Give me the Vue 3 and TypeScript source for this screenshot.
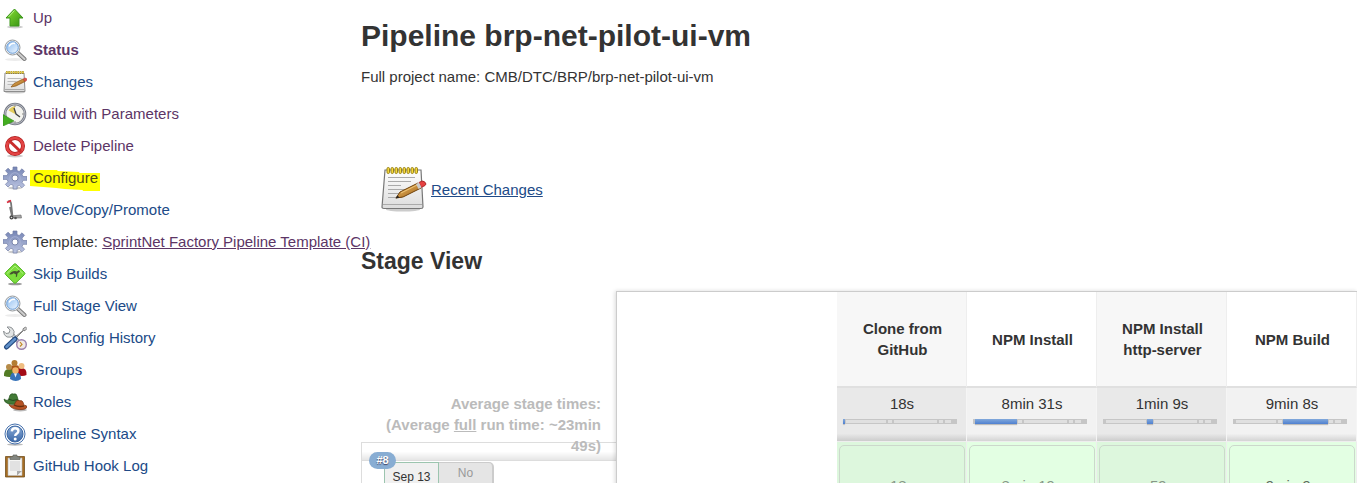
<script setup lang="ts">
interface Task {
  label: string
  icon: string
  visited?: boolean
  current?: boolean
  marked?: boolean
  prefix?: string
}

interface Stage {
  name: string
  average: string
  active: number
  run: string
  slow?: boolean
}

const tasks: Task[] = [
  { label: 'Up', icon: 'up', visited: true },
  { label: 'Status', icon: 'search', visited: true, current: true },
  { label: 'Changes', icon: 'notepad' },
  { label: 'Build with Parameters', icon: 'clock', visited: true },
  { label: 'Delete Pipeline', icon: 'delete', visited: true },
  { label: 'Configure', icon: 'gear', visited: true, marked: true },
  { label: 'Move/Copy/Promote', icon: 'trolley' },
  { label: 'SprintNet Factory Pipeline Template (CI)', icon: 'gear', visited: true, prefix: 'Template:' },
  { label: 'Skip Builds', icon: 'skip' },
  { label: 'Full Stage View', icon: 'search' },
  { label: 'Job Config History', icon: 'tools' },
  { label: 'Groups', icon: 'groups' },
  { label: 'Roles', icon: 'hats' },
  { label: 'Pipeline Syntax', icon: 'help' },
  { label: 'GitHub Hook Log', icon: 'clipboard' },
]

const stages: Stage[] = [
  { name: 'Clone from GitHub', average: '18s', active: 0, run: '18s' },
  { name: 'NPM Install', average: '8min 31s', active: 1, run: '8min 19s' },
  { name: 'NPM Install http-server', average: '1min 9s', active: 2, run: '59s' },
  { name: 'NPM Build', average: '9min 8s', active: 3, run: '9min 9s', slow: true },
]

// Share of the full run taken by each stage
const shares: number[] = [2, 42, 6, 45, 6, 8, 5]
</script>

<template>
  <div class="page">
    <svg class="defs" aria-hidden="true">
      <defs>
        <linearGradient id="green" x1="0" y1="0" x2="1" y2="1">
          <stop offset="0" stop-color="#8ae234" /><stop offset="1" stop-color="#348f13" />
        </linearGradient>
        <linearGradient id="paper" x1="0" y1="0" x2="0" y2="1">
          <stop offset="0" stop-color="#ffffff" /><stop offset="1" stop-color="#dcdcdc" />
        </linearGradient>
        <linearGradient id="steel" x1="0" y1="0" x2="0" y2="1">
          <stop offset="0" stop-color="#7484b4" /><stop offset="1" stop-color="#bcc5e2" />
        </linearGradient>
        <linearGradient id="lens" x1="0" y1="0" x2="1" y2="1">
          <stop offset="0" stop-color="#8fbdf0" /><stop offset="1" stop-color="#eef6ff" />
        </linearGradient>
        <linearGradient id="blue" x1="0" y1="0" x2="0" y2="1">
          <stop offset="0" stop-color="#8aabd6" /><stop offset="1" stop-color="#3b68a8" />
        </linearGradient>
        <linearGradient id="wood" x1="0" y1="0" x2="1" y2="1">
          <stop offset="0" stop-color="#edb968" /><stop offset="1" stop-color="#a06416" />
        </linearGradient>
      </defs>
    </svg>

    <nav class="sidebar" aria-label="Pipeline tasks">
      <div v-for="task in tasks" :key="task.label" class="task">
        <svg class="icon" viewBox="0 0 24 24" aria-hidden="true">
          <g v-if="task.icon === 'up'">
            <ellipse cx="12" cy="21" rx="8" ry="1.500" fill="#ccc" />
            <path d="M11.500 3L20 12h-4v8H7v-8H3z" fill="url(#green)" stroke="#3c971c" />
            <path d="M11.500 4.500L5.500 11" stroke="#b8f08c" fill="none" />
          </g>
          <g v-else-if="task.icon === 'search'">
            <ellipse cx="12" cy="21.500" rx="10" ry="1.500" fill="#ececec" />
            <path d="M14.500 14.500l7 6.500" stroke="#777" stroke-width="4" stroke-linecap="round" />
            <path d="M14.500 14.500l7 6.500" stroke="#ccc" stroke-width="2.200" stroke-linecap="round" />
            <circle cx="9.500" cy="9.500" r="7.500" fill="#eee" stroke="#969b9f" />
            <circle cx="9.500" cy="9.500" r="5.800" fill="url(#lens)" stroke="#6c9fd9" />
            <path d="M6 8.500q2-4 6-3" stroke="#fff" fill="none" stroke-width="1.400" />
          </g>
          <g v-else-if="task.icon === 'notepad'">
            <ellipse cx="12" cy="22.500" rx="10" ry="1" fill="#ccc" />
            <path d="M2 3h19l1 18.500H1z" fill="url(#paper)" stroke="#8d8d8d" />
            <path d="M2 19.500h19.500" stroke="#aaa" />
            <path d="M4.500 8.500h14M4.500 11.500h9M4.500 14.500h7" stroke="#bbb" />
            <path d="M3 2.500h18" stroke="#93812c" stroke-width="3" stroke-dasharray="1.600 .7" />
            <path d="M3 2.200h18" stroke="#f0d545" stroke-width="1.400" stroke-dasharray="1.600 .7" />
            <path d="M8 17l3-3.500 9-4.500 2 2.500-9 4.500z" fill="url(#wood)" stroke="#8a5515" stroke-width=".7" />
            <path d="M20 9l2-1q2 0 2 2l-2 1.500z" fill="#e05248" stroke="#b23830" stroke-width=".5" />
          </g>
          <g v-else-if="task.icon === 'clock'">
            <circle cx="12" cy="12" r="10" fill="#f3f3ee" stroke="#777b86" stroke-width="2.600" />
            <circle cx="12" cy="12" r="10" fill="none" stroke="#c8cad2" stroke-width=".8" />
            <path d="M12 12L5.500 8.500Q8 4.500 12 4z" fill="#e5cd5c" />
            <path d="M11 6l2 6 4 3" stroke="#444" fill="none" stroke-width="1.300" />
            <path d="M12 3v2M19 12h2M12 19v2" stroke="#888" />
            <path d="M0 12.500L11 19 0 24z" fill="#43ad20" stroke="#328b18" stroke-width=".6" />
          </g>
          <g v-else-if="task.icon === 'delete'">
            <ellipse cx="12" cy="22" rx="8" ry="1.500" fill="#ccc" />
            <circle cx="12" cy="12" r="8" fill="#fff" stroke="#ad1d1d" stroke-width="4" />
            <circle cx="12" cy="12" r="8" fill="none" stroke="#e34444" stroke-width="2.600" />
            <path d="M6 6.500l12 11.500" stroke="#c92c2c" stroke-width="3" />
          </g>
          <g v-else-if="task.icon === 'gear'">
            <ellipse cx="12" cy="22" rx="7" ry="1.500" fill="#ccc" />
            <path d="M10 1h4v3.600l2.200.9 2.800-2.700 2.500 2.500-2.500 2.900 1 2.300H24v3.800h-4l-.9 2.200 2.500 2.700-2.600 2.600-2.700-2.500-2.200 1V23h-4v-3.700l-2.200-1L5 21l-2.600-2.600L5 15.700l-1-2.300H0V9.600h4l1-2.200-2.500-2.700L5 2.200l2.800 2.600 2.200-1z" fill="url(#steel)" stroke="#7480a8" stroke-width=".7" />
            <circle cx="12" cy="12" r="5.300" fill="none" stroke="#a9b3d4" stroke-width=".8" />
            <circle cx="12" cy="12" r="3" fill="#fff" stroke="#7c87ad" />
          </g>
          <g v-else-if="task.icon === 'trolley'">
            <path d="M5 3.500q2-1 3 1.500l1.500 13.500M7 9l2 9" stroke="#777" stroke-width="1.800" fill="none" />
            <path d="M4 4.500l4-2" stroke="#db2b3c" stroke-width="1.800" />
            <path d="M7 18l11-1 .5 3H8z" fill="#a5a5a5" stroke="#666" stroke-width=".6" />
            <circle cx="8.500" cy="19.500" r="2" fill="#444" /><circle cx="8.500" cy="19.500" r=".8" fill="#ddd" />
            <circle cx="12.500" cy="20" r="1.300" fill="#555" />
          </g>
          <g v-else-if="task.icon === 'skip'">
            <ellipse cx="12" cy="22" rx="7" ry="1.300" fill="#999" />
            <path d="M11 2.200q1-1 2 0l8.500 8.300q1 1 0 2L13 20.800q-1 1-2 0L2.500 12.500q-1-1 0-2z" fill="#7cdd3c" stroke="#51b522" />
            <path d="M4 11.500L12 4l8 7.500" stroke="#aef080" fill="none" />
            <path d="M6 13q2-4 6-4l2 .4 2-1.400 1 1.400-2.500 2-.5 3-1.200.800.2-2.700-2.300-1.300q-2 1.500-4.500 1.200z" fill="#45522f" />
          </g>
          <g v-else-if="task.icon === 'tools'">
            <path d="M7 6L19 20" stroke="#888f94" stroke-width="4" />
            <path d="M7 6L19 20" stroke="#dcdfdf" stroke-width="2.500" />
            <path d="M4 1l3 3-1 3-3 .5-2.500-2.500q0 4.500 3.500 6 4 1 6.500-1.500Q12.500 5 9 2 7 .5 4 1z" fill="#e1e4e4" stroke="#84898c" stroke-width=".9" />
            <path d="M13 12l7.500-7.500 1.500.2L24 2.500 22.500 1 20 2.800v1.700L12 11z" fill="#ccc" stroke="#777" stroke-width=".9" />
            <path d="M3.500 21L12 13" stroke="#254b82" stroke-width="5" stroke-linecap="round" />
            <path d="M3.500 21L12 13" stroke="#5f8fc8" stroke-width="2.500" stroke-linecap="round" />
            <circle cx="18.500" cy="18.500" r="4.800" fill="#f1e9e6" stroke="#9a80ad" stroke-width="1.400" />
            <path d="M17 16l2 2.500-2 2" stroke="#c08927" stroke-width="1.200" fill="none" />
          </g>
          <g v-else-if="task.icon === 'groups'">
            <path d="M5.500 14q0-7 6.500-7t6.500 7z" fill="#ad5417" /><circle cx="11.500" cy="5" r="3" fill="#b37c32" />
            <path d="M1 18q-.5-7 5-7t5.500 7q-5 2-10.500 0z" fill="#527b24" /><circle cx="6" cy="9" r="3" fill="#b68b49" />
            <path d="M13 17q0-7 5.500-7t5 7q-4 2-10.500 0z" fill="#a40b16" /><circle cx="18.500" cy="8" r="3" fill="#efbd80" />
            <path d="M7 21q0-7 5.500-7t5.500 7q-5 4-11 0z" fill="#3672b8" /><circle cx="12.500" cy="12.500" r="3.200" fill="#f0b467" />
            <path d="M11 15.500h3l-1.500 4z" fill="#e8f2fc" />
          </g>
          <g v-else-if="task.icon === 'hats'">
            <ellipse cx="17" cy="20" rx="7" ry="1.500" fill="#bbb" />
            <path d="M1 9q2 2 4.500 1l1.500-5q2-2 3.500-1 3-1 3.500 2l1 3.500q2 1 1 3-4 3-10 1.500Q1 12.500 1 9z" fill="#427a36" stroke="#27551e" stroke-width=".7" />
            <path d="M5.500 9.200q4 2.200 9 .5" stroke="#22491a" fill="none" />
            <path d="M6 14.500q2 1.500 5 .7l2-4q2-1.500 3.500-.5 3-.5 3.500 1.500l1 3q3 0 3 1.800-1 3-8 2.600-8-.5-10-5.100z" fill="#b65324" stroke="#75300f" stroke-width=".7" />
            <path d="M11 15q5 2.500 10 .8" stroke="#66300e" fill="none" stroke-width="1.300" />
          </g>
          <g v-else-if="task.icon === 'help'">
            <ellipse cx="12" cy="22.500" rx="8" ry="1.200" fill="#bbb" />
            <circle cx="12" cy="12" r="10" fill="#fff" stroke="#4671ad" />
            <circle cx="12" cy="12" r="8" fill="url(#blue)" stroke="#3b67a3" />
            <path d="M8.800 9.300q.4-3 3.300-3 3.300 0 3.300 2.800 0 1.700-1.600 2.500-1.600.9-1.600 2.400" fill="none" stroke="#fff" stroke-width="2.400" />
            <circle cx="12.200" cy="17" r="1.500" fill="#fff" />
          </g>
          <g v-else>
            <path d="M2.500 2.500h19V23h-19z" fill="#a66d23" stroke="#72501f" stroke-width=".8" />
            <path d="M5 4h14v17.500H5z" fill="#f6f6f4" stroke="#bbb" stroke-width=".6" />
            <path d="M7 7h10v10H7z" fill="#e2e2e2" />
            <path d="M14 21.500V17h5z" fill="#aaa" />
            <path d="M7 5.500V3l3-.5V1h4v1.500l3 .5v2.500z" fill="#838680" stroke="#656963" stroke-width=".7" />
          </g>
        </svg>
        <span class="task-text">
          <span v-if="task.prefix">{{ task.prefix }}&nbsp;</span>
          <svg v-if="task.marked" class="marker" viewBox="0 0 69 21" preserveAspectRatio="none" aria-hidden="true">
            <path d="M0 0h27v1l21 1 1 1h20v18H52v-1l-18-1-8-1-26-2z" fill="#ffff00" />
          </svg>
          <a href="#" :class="{ visited: task.visited, current: task.current, marked: task.marked, lined: task.prefix }">{{ task.label }}</a>
        </span>
      </div>
    </nav>

    <main class="main">
      <h1>Pipeline brp-net-pilot-ui-vm</h1>
      <p class="project">Full project name: CMB/DTC/BRP/brp-net-pilot-ui-vm</p>
      <div class="recent">
        <svg class="recent-icon" viewBox="0 0 48 48" aria-hidden="true">
          <ellipse cx="22" cy="44.500" rx="17" ry="2" fill="#ccc" />
          <path d="M4 5h36l2 37q0 1.500-2 1.500H3q-2 0-2-1.500z" fill="url(#paper)" stroke="#777" stroke-width="1.200" />
          <path d="M2 39.500h39" stroke="#aaa" />
          <path d="M7 12.500h27M7 16.500h23M7 20.500h13M7 24.500h26M7 28.500h17M7 32.500h14" stroke="#aaa" />
          <g fill="#f7d83a" stroke="#97831b">
            <rect v-for="n in 8" :key="n" :x="n * 4 + 2" y="2.500" width="2.500" height="6" rx="1.200" />
          </g>
          <path d="M15 33l4-6 18-9 3 5-18 9z" fill="url(#wood)" stroke="#70420b" />
          <path d="M20 28l18-9" stroke="#f0c879" />
          <path d="M38 17.500l3-1.500q3 0 4 3l-1 1.500-4 2z" fill="#e64141" stroke="#ad2929" />
          <path d="M35 19l3-1.500 2.500 5-3 1.500z" fill="#ccc" />
          <path d="M14.500 33.500l2-3 2 2z" fill="#222" />
        </svg>
        <a href="#" class="lined">Recent Changes</a>
      </div>
      <h2>Stage View</h2>

      <section class="stage-view" aria-label="Stage View">
        <div class="runs">
          <div class="averages">
            Average stage times:<br />
            (Average <u>full</u> run time: ~23min 49s)
          </div>
          <div class="divider"></div>
          <div class="run">
            <span class="badge">#8</span>
            <div class="date">Sep 13</div>
            <div class="commits">No</div>
          </div>
        </div>

        <div class="panel">
          <table>
            <colgroup>
              <col class="spacer" />
              <col v-for="stage in stages" :key="stage.name" />
            </colgroup>
            <thead>
              <tr class="names">
                <td></td>
                <th v-for="stage in stages" :key="stage.name" scope="col">{{ stage.name }}</th>
              </tr>
            </thead>
            <tbody>
              <tr class="totals">
                <td></td>
                <td v-for="stage in stages" :key="stage.name">
                  <div class="duration">{{ stage.average }}</div>
                  <div class="bar">
                    <span
                      v-for="(share, i) in shares"
                      :key="i"
                      :class="{ on: i === stage.active }"
                      :style="{ flexGrow: share }"
                    ></span>
                  </div>
                </td>
              </tr>
              <tr class="results">
                <td></td>
                <td v-for="stage in stages" :key="stage.name">
                  <div class="result" :class="{ slow: stage.slow }">{{ stage.run }}</div>
                </td>
              </tr>
            </tbody>
          </table>
        </div>
      </section>
    </main>
  </div>
</template>

<style>
html,
body {
  margin: 0;
  background: #fff;
}
</style>

<style scoped>
.page {
  display: grid;
  grid-template-columns: 361px minmax(0, 1fr);
  height: 100vh;
  overflow: hidden;
  font: 15px/21px "Liberation Sans", Arial, sans-serif;
  color: #333;
}
.defs {
  position: absolute;
  width: 0;
  height: 0;
}
a {
  color: #204a87;
  text-decoration: none;
}
a.visited {
  color: #5c3566;
}
a.current {
  font-weight: bold;
}
a.marked {
  color: #4d4a1c;
  position: relative;
}
a.lined {
  text-decoration: underline;
}
.sidebar {
  padding: 2px 0 0 3px;
}
.task {
  display: flex;
  align-items: center;
  gap: 6px;
  height: 32px;
  white-space: nowrap;
}
.icon {
  flex: none;
  width: 24px;
  height: 24px;
}
.task-text {
  position: relative;
  padding-bottom: 2px;
}
.marker {
  position: absolute;
  left: -3px;
  top: 3px;
  width: calc(100% + 5px);
  height: 21px;
}
.main {
  padding-top: 18px;
}
h1 {
  margin: 0;
  font-size: 30px;
  line-height: 36px;
}
.project {
  margin: 12px 0 0;
}
.recent {
  display: flex;
  align-items: center;
  gap: 2px;
  margin-top: 78px;
  padding-left: 20px;
}
.recent-icon {
  width: 48px;
  height: 48px;
}
h2 {
  margin: 34px 0 16px;
  font-size: 23px;
  line-height: 28px;
}
.stage-view {
  display: grid;
  grid-template-columns: 255px minmax(0, 1fr);
}
.runs {
  padding-top: 102px;
}
.averages {
  height: 49px;
  padding: 0 15px 0 20px;
  text-align: right;
  font-weight: bold;
  color: #bbb;
}
.divider {
  box-sizing: border-box;
  height: 19px;
  border: 1px solid #ddd;
  border-right: 0;
  background: linear-gradient(rgba(255, 255, 255, 0) 50%, rgba(0, 0, 0, 0.1));
}
.run {
  position: relative;
  display: flex;
  height: 90px;
  padding: 1px 0 0 22px;
  border-left: 1px solid #ddd;
  font-size: 12px;
  line-height: 20px;
}
.badge {
  position: absolute;
  left: 7px;
  top: -9px;
  width: 27px;
  border-radius: 9px;
  background: #88add3;
  color: #fff;
  font-size: 11px;
  font-weight: bold;
  line-height: 17px;
  text-align: center;
  text-shadow: 0 1px 1px #446;
  z-index: 1;
}
.date {
  box-sizing: border-box;
  width: 55px;
  padding-top: 4px;
  border: 1px solid #9cc5af;
  background: #f0f0f0;
  text-align: center;
}
.commits {
  box-sizing: border-box;
  width: 55px;
  border: 1px solid #ccc;
  border-width: 1px 2px 1px 0;
  border-radius: 0 5px 0 0;
  background: #e5e5e5;
  color: #999;
  text-align: center;
}
.panel {
  border: solid #ccc;
  border-width: 1px 0 0 1px;
  background: #fff;
  box-shadow: -1px 0 4px rgba(0, 0, 0, 0.15);
}
table {
  width: 100%;
  table-layout: fixed;
  border-collapse: separate;
  border-spacing: 0;
  text-align: center;
}
.spacer {
  width: 220px;
}
th,
td {
  padding: 0;
}
.names th {
  box-sizing: border-box;
  height: 96px;
  padding: 0 16px 0 18px;
  border-right: 1px solid #eee;
  border-bottom: 2px solid #e0e0e0;
}
.names th:nth-child(even) {
  background: #f7f7f7;
}
.totals td {
  box-sizing: border-box;
  height: 54px;
  padding: 5px 9px 0 6px;
  vertical-align: top;
}
.totals td + td {
  border-right: 1px solid #f5f5f5;
  border-bottom: 1px solid #eee;
  background: linear-gradient(#f2f2f2 86%, #d4d4d4);
}
.totals td:nth-child(even) {
  background: linear-gradient(#e9e9e9 86%, #ccc);
}
.duration {
  text-indent: 4px;
}
.bar {
  display: flex;
  height: 5px;
  margin-top: 5px;
}
.bar span {
  flex: 1 1 0;
  background: #e0e0e0;
  box-shadow: inset 0 0 0 1px #c6c6c6;
}
.bar span:last-child {
  background: #c6c6c6;
}
.bar .on {
  background: linear-gradient(#82a9db, #4f80d0);
  box-shadow: 0 1px 1px #bbb;
}
.results td {
  padding: 3px 1px 2px 2px;
  vertical-align: top;
}
.results td + td {
  border-right: 1px solid #eee;
  background: #e3ffe3;
}
.results td:nth-child(even) {
  background: #ddf7dd;
}
.result {
  box-sizing: border-box;
  height: 86px;
  padding-top: 29px;
  border: 1px solid #ccd8cc;
  border-radius: 5px;
  color: #889688;
}
.slow {
  color: #5f6b5f;
}
</style>
